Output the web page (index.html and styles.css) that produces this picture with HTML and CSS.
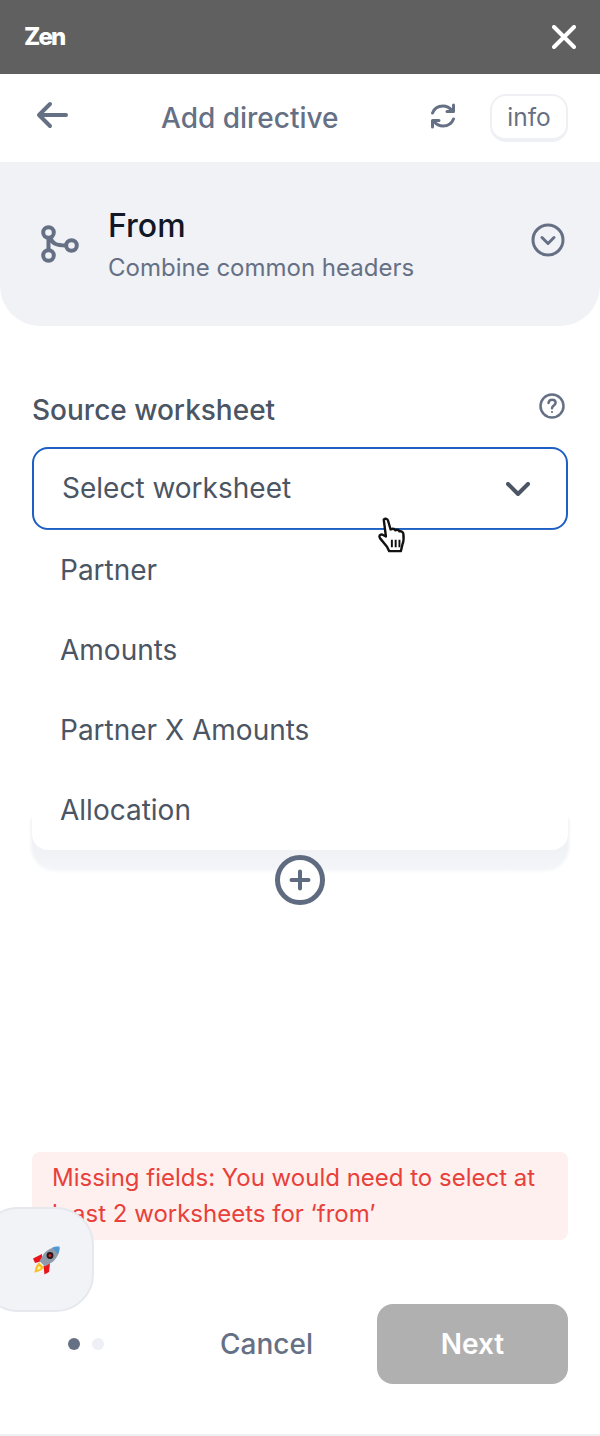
FILE: index.html
```html
<!DOCTYPE html>
<html lang="en">
<head>
<meta charset="utf-8">
<title>Zen</title>
<link rel="stylesheet" href="styles.css">
</head>
<body>
<div class="app">
  <header class="titlebar">
    <span class="brand">Zen</span>
    <svg class="close" viewBox="0 0 24 24" width="24" height="24"><path d="M2 2 22 22M22 2 2 22"/></svg>
  </header>
  <div class="toolbar">
    <svg class="back" viewBox="0 0 32 28" width="32" height="28"><path d="M30 14H3M14 3 3 14l11 11"/></svg>
    <h1 class="title">Add directive</h1>
    <svg class="refresh" viewBox="0 0 28 28" width="28" height="28"><path d="M3.500 11C5 7 9 4 14 4c3.500 0 6.500 1.500 9 4.500"/><path d="M24.500 3v6.500H18"/><path d="M24.500 17c-1.500 4-5.500 7-10.500 7-3.500 0-6.500-1.500-9-4.500"/><path d="M3.500 25v-6.500H10"/></svg>
    <button class="info">info</button>
  </div>
  <section class="panel">
    <svg class="branch" viewBox="0 0 38 38" width="38" height="38"><circle cx="7.500" cy="7.500" r="5.300"/><circle cx="7.500" cy="30.500" r="5.300"/><circle cx="30.500" cy="20.500" r="5.300"/><path d="M7.500 12.800v12.400M9.500 13c2 5.500 5 7.500 15.700 7.500"/></svg>
    <div class="panel-text">
      <div class="panel-title">From</div>
      <div class="panel-sub">Combine common headers</div>
    </div>
    <svg class="panel-toggle" viewBox="0 0 34 34" width="34" height="34"><circle cx="17" cy="17" r="15"/><path d="M11 14.500 17 20.500 23 14.500"/></svg>
  </section>
  <main class="content">
    <div class="label-row">
      <label class="field-label">Source worksheet</label>
      <svg class="help" viewBox="0 0 26 26" width="26" height="26"><circle cx="13" cy="13" r="11.500"/><path d="M9.500 10c.3-2 1.700-3.200 3.600-3.200 2 0 3.500 1.300 3.500 3 0 2.700-3.600 2.700-3.600 5.400"/><circle class="dot" cx="13" cy="19" r="1.100"/></svg>
    </div>
    <div class="select-wrap">
      <div class="select">
        <span>Select worksheet</span>
        <svg class="chevron" viewBox="0 0 24 14" width="24" height="14"><path d="M2 2 12 12 22 2"/></svg>
      </div>
      <div class="menu-shadow"></div>
      <ul class="menu">
        <li>Partner</li>
        <li>Amounts</li>
        <li>Partner X Amounts</li>
        <li>Allocation</li>
      </ul>
      <svg class="cursor" viewBox="0 0 32 36" width="35" height="39"><path d="M7 2.500c1.500-1.500 3.500-.8 4 1l2.300 8c2-1 3.500-.8 4.300.8 1.700-.8 3.200-.4 3.900 1 1.800-.5 3.300.4 3.600 2.200.5 3.500.2 7.500-1 10.500l-1.300 5.500H12l-2-4-6.500-8c-1.300-1.700 0-3.700 2-3.300l3.500 1.800Z"/><path class="lines" d="M14.500 21v7M18 21v7M21.500 21v7"/></svg>
    </div>
    <div class="add-row">
      <svg class="add" viewBox="0 0 50 50" width="50" height="50"><circle cx="25" cy="25" r="22.500"/><path d="M25 16.500v17M16.500 25h17"/></svg>
    </div>
    <div class="error">Missing fields: You would need to select at least 2 worksheets for ‘from’</div>
  </main>
  <footer class="footer">
    <div class="dots"><span class="dot-on"></span><span class="dot-off"></span></div>
    <button class="cancel">Cancel</button>
    <button class="next">Next</button>
  </footer>
  <div class="rocket-tab">
    <svg class="rocket" viewBox="0 0 30 30" width="30" height="30">
      <path fill="#e8161c" d="M10 9 1 13.500 3 18 10 16Z"/>
      <path fill="#e8161c" d="M18 18 17 27 12.500 29.500 11.500 21Z"/>
      <path fill="#fbbf24" d="M7 17.500c-2.500 1.500-4 5.500-4.500 10C6.500 27 10 25 12 22.500Z"/>
      <path fill="#fff3b0" d="M7 21c-1 1-1.500 2.500-2 4 1.500-.4 3-1 4-2Z"/>
      <path fill="#8f9baa" d="M27 2c-6-.5-11 2-15 6.500L7.500 16l5.500 5.500 7.500-4.500C25 13 28 8 27 2Z"/>
      <path fill="#4f98d2" d="M27.500 1.500c-3-.2-5.500.3-7.500 1.300L26 9c1.300-2.500 1.900-5 1.500-7.500Z"/>
      <circle fill="#2a1416" cx="18" cy="10.500" r="3.400"/>
      <circle fill="#c3272b" cx="18" cy="10.500" r="1.500"/>
    </svg>
  </div>
  <div class="bottom-line"></div>
</div>
</body>
</html>
```
FILE: styles.css
```css
* { box-sizing: border-box; }
html, body { margin: 0; padding: 0; }
body { font-family: Inter, "Liberation Sans", sans-serif; color: #4b5563; background: #fff; }
svg { display: block; flex: none; fill: none; }
button { font: inherit; border: 0; background: none; padding: 0; }
.app { position: relative; width: 600px; height: 1436px; display: flex; flex-direction: column; overflow: hidden; }

.titlebar { height: 74px; flex: none; background: #606060; display: flex; align-items: center; justify-content: space-between; padding: 0 24px; }
.brand { color: #fff; font-size: 24px; font-weight: 800; letter-spacing: -1.9px; margin-top: -1px; }
.close path { stroke: #fff; stroke-width: 4; stroke-linecap: round; }

.toolbar { height: 88px; flex: none; display: flex; align-items: center; padding: 0 32px 0 36px; }
.back { margin-top: -6px; }
.back path { stroke: #667085; stroke-width: 4; stroke-linecap: round; stroke-linejoin: round; fill: none; }
.title { margin: 0 0 0 93px; font-size: 28px; font-weight: 500; color: #667085; line-height: 1; }
.refresh { margin-left: 90px; margin-top: -5px; }
.refresh path { stroke: #667085; stroke-width: 3; stroke-linecap: round; stroke-linejoin: round; }
.info { margin-left: auto; width: 78px; height: 48px; border: 2px solid #eef0f4; border-bottom-width: 4px; border-radius: 16px; font-size: 24.5px; color: #667085; background: #fff; }

.panel { height: 164px; flex: none; background: #f0f2f6; border-radius: 0 0 40px 40px; display: flex; align-items: center; padding: 0 35px 0 41px; }
.branch circle, .branch path { stroke: #667085; stroke-width: 4; }
.panel-text { margin-left: 29px; flex: 1; }
.panel-title { font-size: 32px; font-weight: 500; color: #111827; line-height: 40px; }
.panel-sub { font-size: 24px; color: #667085; line-height: 30px; margin-top: 7px; }
.panel-toggle { margin-top: -8px; }
.panel-toggle circle { stroke: #667085; stroke-width: 3; }
.panel-toggle path { stroke: #667085; stroke-width: 3; stroke-linecap: round; stroke-linejoin: round; }

.content { flex: 1; padding: 0 32px; display: flex; flex-direction: column; }
.label-row { display: flex; align-items: flex-start; justify-content: space-between; margin-top: 66px; height: 55px; }
.field-label { font-size: 28px; font-weight: 500; color: #4b5563; line-height: 36px; }
.help { margin: 1px 3px 0 0; }
.help circle { stroke: #667085; stroke-width: 2.500; }
.help path { stroke: #667085; stroke-width: 2.500; stroke-linecap: round; }
.help .dot { fill: #667085; stroke: none; }

.select-wrap { position: relative; height: 82px; }
.select { height: 83px; border: 2px solid #1d5fc4; border-radius: 16px; display: flex; align-items: center; justify-content: space-between; padding: 0 36px 2px 28px; font-size: 28px; color: #4b5563; }
.chevron { margin-top: 2px; }
.chevron path { stroke: #4b5563; stroke-width: 4; stroke-linecap: round; stroke-linejoin: round; }

.menu-shadow { position: absolute; left: -1px; right: -1px; top: 372px; height: 52px; background: linear-gradient(#ebedef, #eff1f4 50%, #f3f5f8); border-radius: 0 0 24px 24px; filter: blur(1.500px); }
.menu { position: absolute; top: 83px; left: 0; right: 0; margin: 0; padding: 0; list-style: none; background: #fff; border-radius: 0 0 16px 16px; box-shadow: 0 0 1px #f0f2f6; }
.menu li { height: 80px; padding: 0 28px; display: flex; align-items: center; font-size: 28px; color: #4b5563; }
.cursor { position: absolute; left: 344px; top: 70px; }
.cursor path { fill: #fff; stroke: #111; stroke-width: 2.200; stroke-linejoin: round; }
.cursor .lines { stroke-width: 1.800; fill: none; }

.add-row { position: relative; display: flex; justify-content: center; margin-top: 326px; }
.add circle { stroke: #5f6b80; stroke-width: 5; fill: #fff; }
.add path { stroke: #5f6b80; stroke-width: 4; stroke-linecap: round; }

.error { margin-top: 247px; height: 88px; background: #fef0ef; border-radius: 8px; padding: 8px 20px; font-size: 24px; line-height: 36px; color: #e8403a; }

.footer { height: 132px; flex: none; display: flex; align-items: flex-start; padding: 0 32px; }
.dots { display: flex; gap: 12px; margin: 34px 0 0 36px; }
.dot-on, .dot-off { width: 12px; height: 12px; border-radius: 50%; }
.dot-on { background: #667085; }
.dot-off { background: #eef0f5; }
.cancel { margin-left: 116px; height: 80px; font-size: 28px; font-weight: 500; color: #667085; }
.next { margin-left: auto; width: 191px; height: 80px; border-radius: 16px; background: #b0b0b0; color: #fff; font-size: 28px; font-weight: 600; }

.rocket-tab { position: absolute; left: -20px; top: 1207px; width: 114px; height: 105px; background: #f1f3f7; border: 2px solid #e5e8ed; border-radius: 38px; display: flex; align-items: center; padding-left: 50px; }
.bottom-line { position: absolute; left: 0; right: 0; bottom: 0; height: 2px; background: #eef0f4; }
```
